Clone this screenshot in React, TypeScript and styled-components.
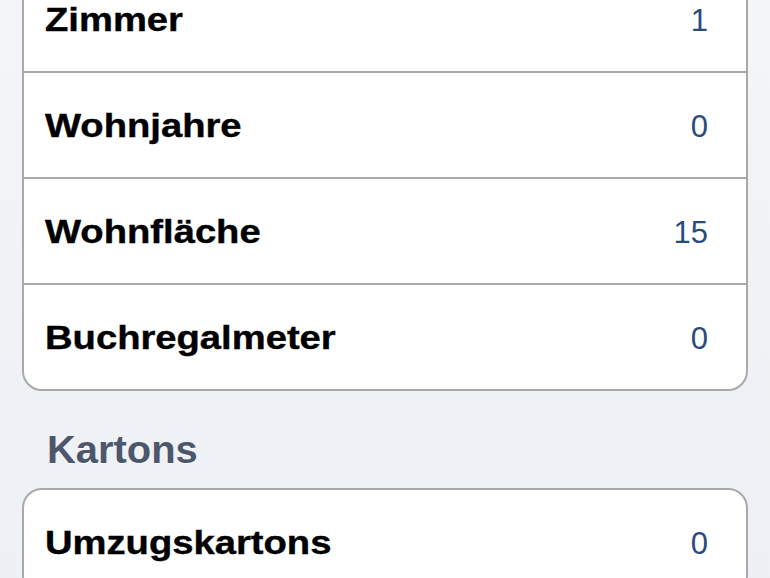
import React from 'react';
import styled, { createGlobalStyle } from 'styled-components';

interface Item {
  label: string;
  value: string;
}

interface Section {
  title?: string;
  items: Item[];
}

const sections: Section[] = [
  {
    items: [
      { label: 'Zimmer', value: '1' },
      { label: 'Wohnjahre', value: '0' },
      { label: 'Wohnfläche', value: '15' },
      { label: 'Buchregalmeter', value: '0' },
    ],
  },
  {
    title: 'Kartons',
    items: [{ label: 'Umzugskartons', value: '0' }],
  },
];

const GlobalStyle = createGlobalStyle`
  html, body {
    margin: 0;
    padding: 0;
    height: 100%;
    overflow: hidden;
  }
  body {
    background: linear-gradient(180deg, #f3f5f8 0%, #edf0f4 100%);
    font-family: 'Liberation Sans', Arial, sans-serif;
  }
`;

const Page = styled.div`
  height: 578px;
  overflow: hidden;
  padding: 0 22px;
  box-sizing: border-box;
`;

const Group = styled.div<{ first?: boolean }>`
  margin-top: ${({ first }) => (first ? '-35px' : '0')};
  background: #ffffff;
  border: 2px solid #a9a9a9;
  border-radius: 20px;
  overflow: hidden;
`;

const Header = styled.div`
  padding: 40px 25px 19px;
  height: 38px;
  line-height: 38px;
  font-size: 38px;
  font-weight: 700;
  color: #4c566c;
  text-shadow: 0 1px 0 #ffffff;
`;

const HeaderText = styled.span`
  display: inline-block;
  transform: scaleX(1.05);
  transform-origin: left center;
`;

const Row = styled.div<{ divider: boolean }>`
  display: flex;
  align-items: center;
  justify-content: space-between;
  height: 104px;
  padding: 0 38px 0 21px;
  border-top: ${({ divider }) => (divider ? '2px solid #a9a9a9' : 'none')};
`;

const Label = styled.span`
  display: inline-block;
  font-size: 34px;
  font-weight: 700;
  color: #000000;
  -webkit-text-stroke: 0.4px #000000;
  transform: scaleX(1.123);
  transform-origin: left center;
`;

const Value = styled.span`
  font-size: 31px;
  color: #2a4a80;
  padding-top: 3px;
`;

export default function App() {
  return (
    <>
      <GlobalStyle />
      <Page>
        {sections.map((section, si) => (
          <React.Fragment key={si}>
            {section.title && (
              <Header>
                <HeaderText>{section.title}</HeaderText>
              </Header>
            )}
            <Group first={si === 0}>
              {section.items.map((item, i) => (
                <Row key={item.label} divider={i > 0}>
                  <Label>{item.label}</Label>
                  <Value>{item.value}</Value>
                </Row>
              ))}
            </Group>
          </React.Fragment>
        ))}
      </Page>
    </>
  );
}
